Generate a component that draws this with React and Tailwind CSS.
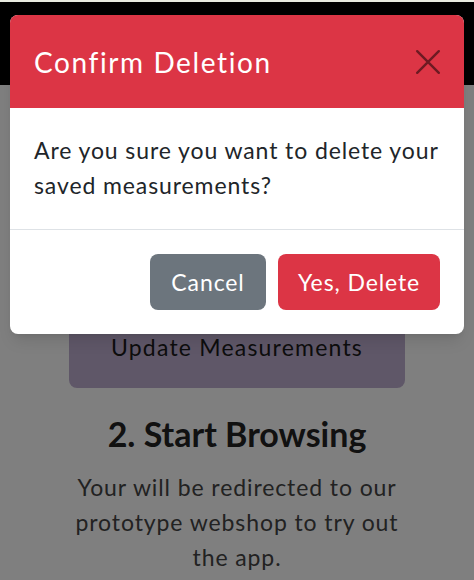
import React from 'react';

const ConfirmDeleteModal = () => {
  return (
    <div className="absolute left-[10px] top-[15px] w-[454px] bg-white rounded-lg overflow-hidden shadow-lg">
      {/* Header */}
      <div className="flex items-center justify-between h-[93px] px-6 bg-[#dc3545]">
        <h2 className="text-[28px] tracking-[1.6px] text-white leading-none">Confirm Deletion</h2>
        <button className="w-[32px] h-[32px] flex items-center justify-center mr-[-4px] text-black opacity-50">
          <svg width="26" height="26" viewBox="0 0 24 24" fill="none" stroke="currentColor" strokeWidth="2.2" strokeLinecap="round">
            <path d="M2 2L22 22M22 2L2 22" />
          </svg>
        </button>
      </div>

      {/* Body */}
      <div className="px-6 pt-[25px] pb-[26px] border-b border-[#dee2e6]">
        <p className="text-[23px] tracking-[0.9px] leading-[35px] text-[#212529]">
          Are you sure you want to delete your saved measurements?
        </p>
      </div>

      {/* Footer */}
      <div className="flex justify-end gap-3 px-6 py-6">
        <button className="h-[56px] w-[116px] rounded-lg bg-[#6c757d] text-white text-[23px] tracking-[0.9px]">Cancel</button>
        <button className="h-[56px] w-[162px] rounded-lg bg-[#dc3545] text-white text-[23px] tracking-[0.9px]">Yes, Delete</button>
      </div>
    </div>
  );
};

const App = () => {
  return (
    <div
      className="relative w-[474px] h-[580px] overflow-hidden bg-white"
      style={{ fontFamily: 'Lato, "Open Sans", sans-serif' }}
    >
      {/* Page behind the dialog */}
      <div className="h-[2px] bg-[#e9ebe0]" />
      <div className="h-[83px] bg-black" />
      <div className="flex flex-col items-center pt-[222px]">
        <div className="w-[336px] h-[81px] rounded-lg bg-[#bfafd1] flex items-end justify-center pb-[24px]">
          <span className="text-[23px] tracking-[1.2px] text-[#1a1a1a]">Update Measurements</span>
        </div>
        <h3 className="mt-[24px] text-[34px] leading-[44px] font-bold text-[#222] tracking-[0px]">2. Start Browsing</h3>
        <p className="mt-[14px] w-[350px] text-center text-[23px] tracking-[0.9px] leading-[35px] text-[#444]">
          Your will be redirected to our prototype webshop to try out the app.
        </p>
      </div>

      {/* Backdrop */}
      <div className="absolute inset-0 top-[2px] bg-black/50" />

      <ConfirmDeleteModal />
    </div>
  );
};

export default App;
